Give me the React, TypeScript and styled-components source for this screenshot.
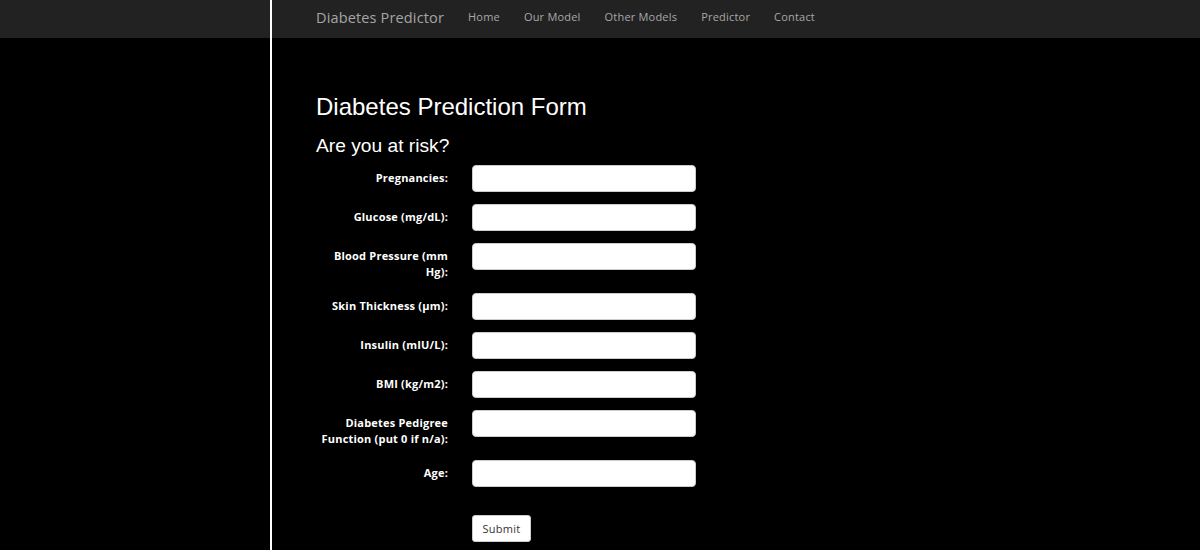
import React from "react";
import styled, { createGlobalStyle } from "styled-components";

const Global = createGlobalStyle`
  html, body { margin: 0; padding: 0; background: #000; }
  body { font-family: "Open Sans", "Liberation Sans", sans-serif; color: #fff; }
  * { box-sizing: border-box; }
`;

const Page = styled.div`
  position: relative;
  min-height: 550px;
  background: #000;
  &::after {
    content: "";
    position: absolute;
    top: 0;
    bottom: 0;
    left: 270px;
    width: 2px;
    background: #fff;
  }
`;

const NavBar = styled.nav`
  height: 38px;
  background: #222;
  display: flex;
  align-items: center;
  padding-left: 316px;
`;

const Brand = styled.a`
  font-family: "Open Sans", sans-serif;
  font-size: 14.5px;
  color: #a5a5a5;
  margin-right: 24px;
  letter-spacing: 0.15px;
  padding-bottom: 4px;
`;

const NavLinks = styled.div`
  display: flex;
  gap: 24px;
`;

const NavLink = styled.a`
  font-size: 11px;
  letter-spacing: 0.2px;
  color: #a8a8a8;
  padding-bottom: 6px;
`;

const Main = styled.main`
  padding: 55px 0 0 316px;
`;

const Title = styled.h1`
  font-family: "Liberation Sans", Arial, sans-serif;
  font-weight: 400;
  font-size: 24px;
  margin: 0;
  line-height: 28px;
`;

const Subtitle = styled.h2`
  font-family: "Liberation Sans", Arial, sans-serif;
  font-weight: 400;
  font-size: 19.2px;
  margin: 13px 0 0;
  line-height: 24px;
`;

const Form = styled.form`
  display: flex;
  flex-direction: column;
  gap: 12px;
  margin-top: 7px;
`;

const Row = styled.div`
  display: flex;
  align-items: flex-start;
`;

const Label = styled.label`
  width: 132px;
  text-align: right;
  font-size: 11px;
  font-weight: 700;
  letter-spacing: 0.2px;
  line-height: 16px;
  padding: 5px 0 1px;
  margin-right: 24px;
`;

const Input = styled.input`
  width: 224px;
  height: 27px;
  border: 1px solid #ccc;
  border-radius: 4px;
  background: #fff;
  padding: 4px 8px;
`;

const SubmitRow = styled.div`
  padding-left: 156px;
  margin-top: 28px;
`;

const Button = styled.button`
  font-family: "Open Sans", sans-serif;
  width: 59px;
  height: 27px;
  background: #fff;
  border: 1px solid #ccc;
  border-radius: 3px;
  font-size: 11px;
  letter-spacing: 0.3px;
  color: #333;
  padding: 0;
`;

const fields = [
  "Pregnancies:",
  "Glucose (mg/dL):",
  "Blood Pressure (mm Hg):",
  "Skin Thickness (μm):",
  "Insulin (mIU/L):",
  "BMI (kg/m2):",
  "Diabetes Pedigree Function (put 0 if n/a):",
  "Age:",
];

export default function App() {
  return (
    <Page>
      <Global />
      <NavBar>
        <Brand>Diabetes Predictor</Brand>
        <NavLinks>
          {["Home", "Our Model", "Other Models", "Predictor", "Contact"].map((l) => (
            <NavLink key={l}>{l}</NavLink>
          ))}
        </NavLinks>
      </NavBar>
      <Main>
        <Title>Diabetes Prediction Form</Title>
        <Subtitle>Are you at risk?</Subtitle>
        <Form onSubmit={(e) => e.preventDefault()}>
          {fields.map((f) => (
            <Row key={f}>
              <Label>{f}</Label>
              <Input type="text" />
            </Row>
          ))}
        </Form>
        <SubmitRow>
          <Button type="submit">Submit</Button>
        </SubmitRow>
      </Main>
    </Page>
  );
}
